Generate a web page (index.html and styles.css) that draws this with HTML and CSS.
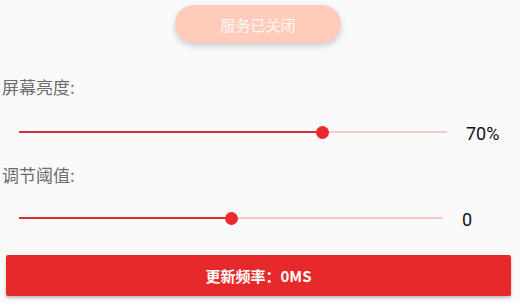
FILE: index.html
```html
<!DOCTYPE html>
<html lang="zh">
<head>
<meta charset="utf-8">
<link rel="stylesheet" href="styles.css">
</head>
<body>
<div class="screen">
  <div class="top">
    <button class="pill">服务已关闭</button>
  </div>
  <div class="label label-first">屏幕亮度:</div>
  <div class="row">
    <div class="slider slider-a">
      <div class="track">
        <div class="fill" style="width: 71%"></div>
        <div class="thumb" style="left: 71%"></div>
      </div>
    </div>
    <div class="value value-a">70%</div>
  </div>
  <div class="label label-second">调节阈值:</div>
  <div class="row row-second">
    <div class="slider">
      <div class="track">
        <div class="fill" style="width: 50%"></div>
        <div class="thumb" style="left: 50%"></div>
      </div>
    </div>
    <div class="value value-b">0</div>
  </div>
  <div class="bottom">
    <button class="action">更新频率：0MS</button>
  </div>
</div>
</body>
</html>
```

FILE: styles.css
```css
html, body {
  margin: 0;
  padding: 0;
  background: #fafafa;
}
.screen {
  width: 520px;
  height: 303px;
  overflow: hidden;
  font-family: Roboto, "Noto Sans CJK SC", sans-serif;
}
.top {
  display: flex;
  justify-content: center;
  padding-top: 5px;
  padding-right: 4px;
}
.pill {
  width: 166px;
  height: 38px;
  border: none;
  border-radius: 19px;
  background: #ffccbc;
  color: rgba(255, 255, 255, 0.85);
  font-family: "Noto Sans CJK SC", sans-serif;
  font-size: 15px;
  box-shadow: 0 3px 6px rgba(0, 0, 0, 0.18);
  padding: 0;
}
.label {
  font-family: "Noto Sans CJK SC", sans-serif;
  font-size: 17px;
  line-height: 20px;
  color: #6b6b6b;
  padding-left: 2px;
}
.label-first {
  margin-top: 34px;
}
.label-second {
  margin-top: 23px;
}
.row {
  display: flex;
  align-items: center;
  height: 20px;
  margin-top: 25px;
}
.row-second {
  margin-top: 23px;
}
.slider {
  flex: 1;
  padding-left: 19px;
}
.track {
  position: relative;
  height: 2px;
  background: #f6c9c9;
}
.fill {
  height: 2px;
  background: #d23236;
}
.thumb {
  position: absolute;
  top: -5.5px;
  width: 13px;
  height: 13px;
  margin-left: -6.5px;
  border-radius: 50%;
  background: #ea2a2e;
}
.value {
  font-family: Roboto, sans-serif;
  font-size: 18px;
  line-height: 20px;
  padding-top: 3px;
  color: #111;
  margin-left: 19px;
}
.value-a {
  width: 54px;
}
.value-b {
  width: 58px;
}
.bottom {
  padding: 27px 9px 0 6px;
}
.action {
  display: block;
  width: 100%;
  height: 41px;
  border: none;
  border-radius: 2px;
  background: #e8292c;
  color: #fff;
  font-family: "Noto Sans CJK SC", sans-serif;
  font-weight: bold;
  font-size: 15px;
  box-shadow: 0 2px 3px rgba(0, 0, 0, 0.25);
  padding: 0;
}
```
